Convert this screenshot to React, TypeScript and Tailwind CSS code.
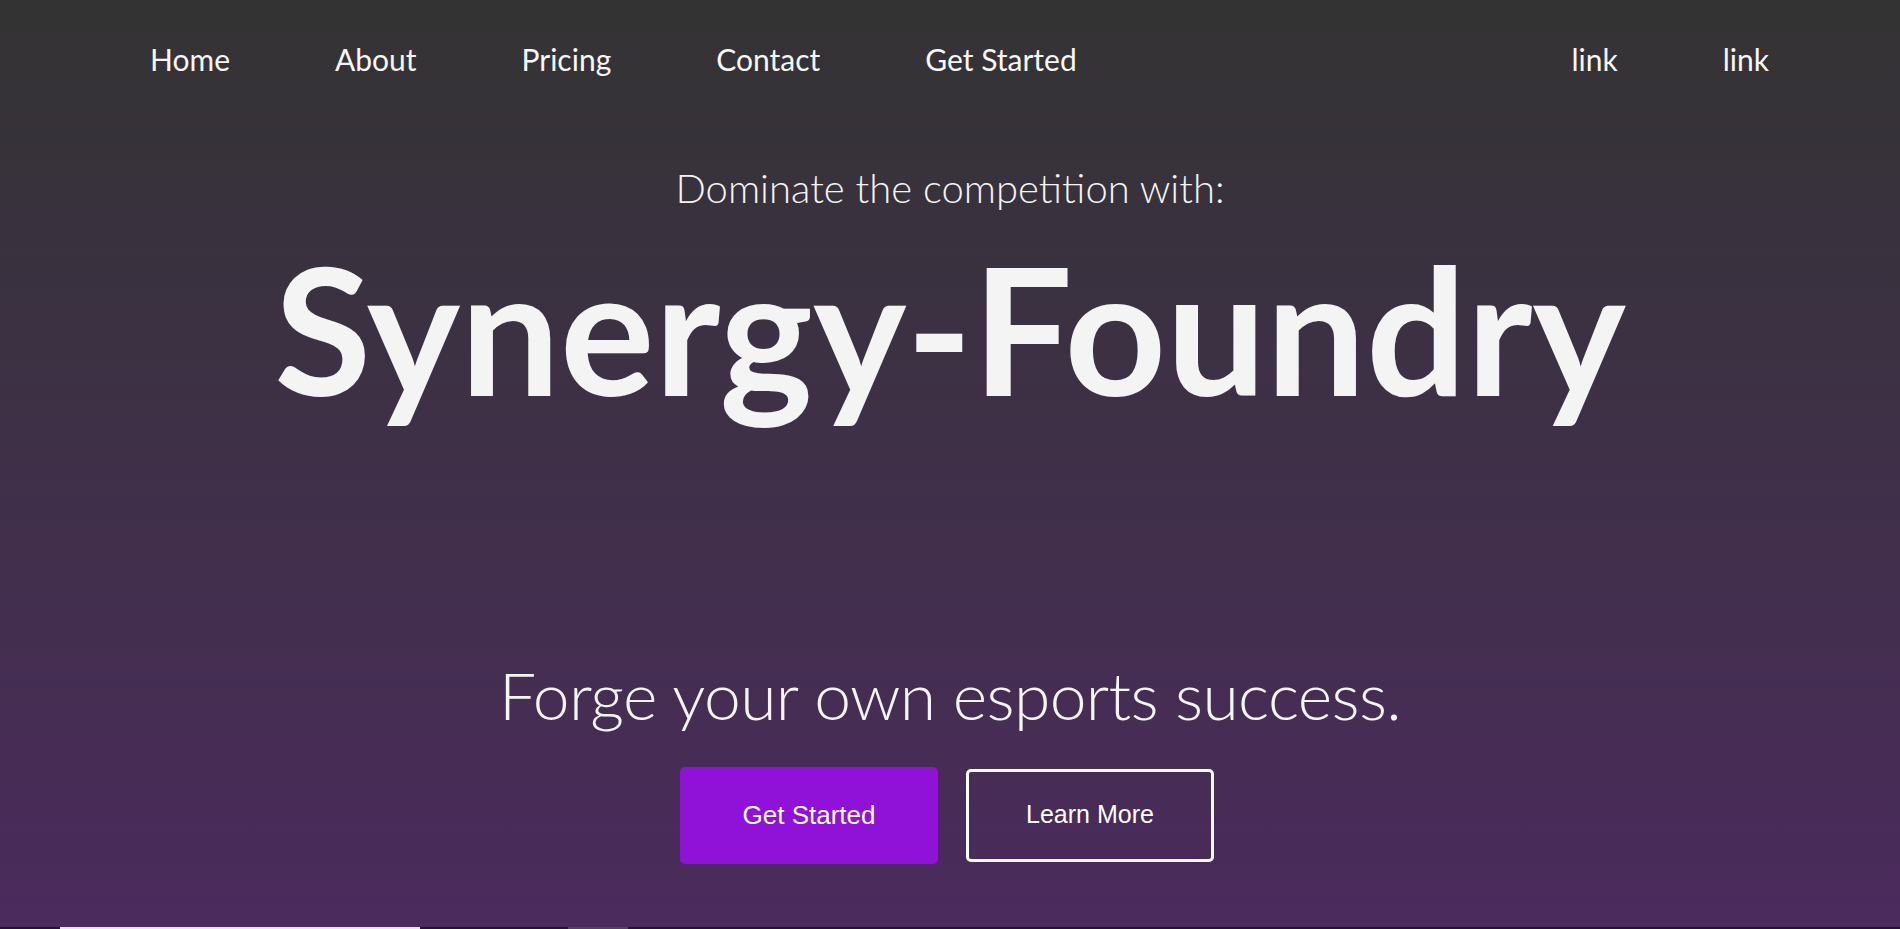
import React from "react";

const navLeft = ["Home", "About", "Pricing", "Contact", "Get Started"];
const navRight = ["link", "link"];

const Navbar = () => (
  <nav className="flex h-[118px] items-center justify-between pl-[150px] pr-[131px]">
    <ul className="flex items-center gap-[105px]">
      {navLeft.map((item) => (
        <li key={item}>
          <a href="#" className="text-[30px] leading-[1.2] text-[#f7f7f7]">
            {item}
          </a>
        </li>
      ))}
    </ul>
    <ul className="flex items-center gap-[105px]">
      {navRight.map((item, idx) => (
        <li key={idx}>
          <a href="#" className="text-[30px] leading-[1.2] text-[#f7f7f7]">
            {item}
          </a>
        </li>
      ))}
    </ul>
  </nav>
);

const Hero = () => (
  <section className="flex flex-col items-center pt-[46px] text-center">
    <p className="text-[40px] font-light leading-[1.2] text-[#f4f4f4]">
      Dominate the competition with:
    </p>
    <h1 className="mt-[10px] text-[177px] font-bold leading-[1.2] text-[#f4f4f4]">Synergy-Foundry</h1>
    <p className="mt-[221px] text-[66px] font-light leading-[1.2] tracking-[-0.01em] text-[#f4f4f4]">
      Forge your own esports success.
    </p>
    <div className="mt-[32px] mr-[6px] flex items-center gap-[28px] font-['Liberation_Sans',Arial,sans-serif]">
      <button className="h-[97px] w-[258px] rounded-[5px] bg-[#9012d9] text-[26px] text-white">
        Get Started
      </button>
      <button className="h-[93px] w-[248px] rounded-[5px] border-[3px] border-white text-[25px] text-white">
        Learn More
      </button>
    </div>
  </section>
);

export default function App() {
  return (
    <div className="font-['Lato','Open_Sans',sans-serif]">
      <div className="h-[927px] overflow-hidden bg-gradient-to-b from-[#333333] to-[#4b2a5d]">
        <Navbar />
        <Hero />
      </div>
      {/* next section, only its top edge shows in the viewport */}
      <div className="h-[200px] bg-[#1d1a26]">
        <div className="flex">
          <div className="ml-[60px] h-[2px] w-[360px] bg-[#ece4f2]" />
          <div className="ml-[148px] h-[2px] w-[60px] bg-[#4c4853]" />
        </div>
      </div>
    </div>
  );
}
